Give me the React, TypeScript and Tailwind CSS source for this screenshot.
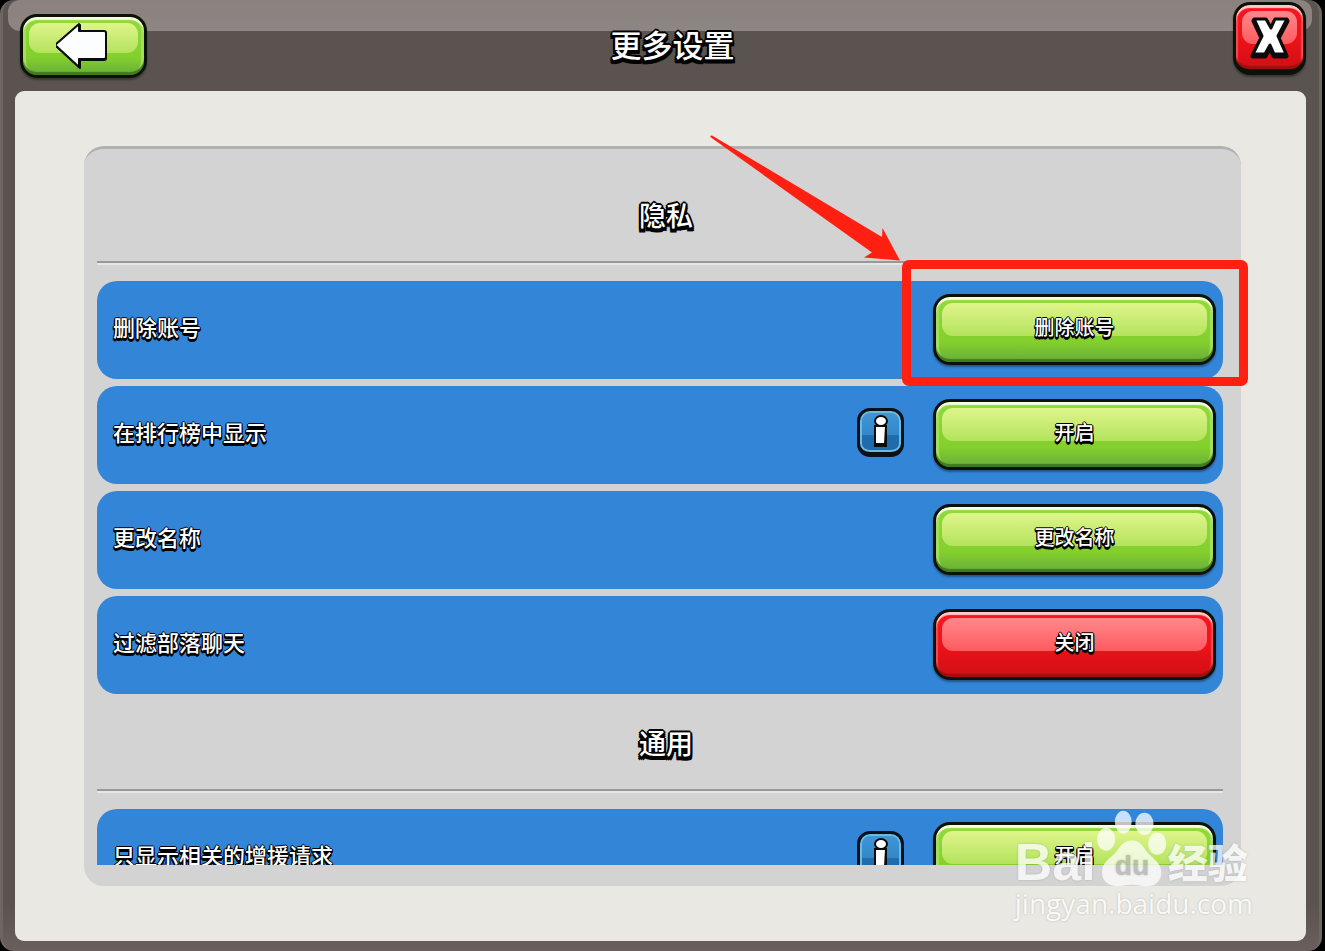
import type { ReactNode } from "react";
import { clsx } from "clsx";

const largeOutline =
  "[text-shadow:-2px_0_#000,2px_0_#000,0_-2px_#000,0_2px_#000,-1px_-1px_#000,1px_-1px_#000,-2px_2px_#000,2px_2px_#000,-2px_4px_#000,0_4px_#000,2px_4px_#000]";
const smallOutline =
  "[text-shadow:-1px_0_#000,1px_0_#000,0_-1px_#000,-1px_1px_#000,1px_1px_#000,-1px_2px_#000,0_2px_#000,1px_2px_#000,0_3px_#000]";

type Tone = "green" | "red";

interface GlossyButtonProps {
  tone: Tone;
  label?: string;
  className?: string;
  children: ReactNode;
}

function GlossyButton({ tone, label, className, children }: GlossyButtonProps) {
  return (
    <button
      type="button"
      aria-label={label}
      className={clsx(
        "relative flex shrink-0 items-center justify-center rounded-[17px] border-[3px] border-[#0d1208]",
        tone === "green" &&
          "bg-linear-to-b from-[#92da3a] via-[#83cf2c] via-70% to-[#67ad38] shadow-[inset_0_3px_1px_#f4fde2,inset_0_-3px_1px_#3d7a20,inset_3px_0_1px_#a4e05c,inset_-3px_0_1px_#a4e05c,0_2px_2px_rgba(0,0,0,0.35)]",
        tone === "red" &&
          "bg-linear-to-b from-[#fb1420] via-[#ef1219] to-[#cf1015] shadow-[inset_0_3px_1px_#ffc9cb,inset_0_-3px_1px_#a30c10,inset_2px_0_1px_#fb4750,inset_-2px_0_1px_#fb4750,0_2px_2px_rgba(0,0,0,0.35)]",
        className,
      )}
    >
      <span
        className={clsx(
          "absolute inset-x-[6px] top-[6px] bottom-1/2 mb-[-7px] rounded-[11px] bg-linear-to-b",
          tone === "green" && "from-[#dff58a] to-[#b3e35c]",
          tone === "red" && "from-[#ff878b] to-[#fd5a60]",
        )}
      />
      <span className="relative">{children}</span>
    </button>
  );
}

function InfoButton({ label }: { label: string }) {
  return (
    <button
      type="button"
      aria-label={label}
      className="mb-1 flex h-[49px] w-[47px] shrink-0 items-center justify-center rounded-[13px] border-[3px] border-b-[5px] border-[#0b1118] bg-linear-to-b from-[#3f98d8] from-0% via-[#3287c8] via-58% to-[#1e6cac] to-60% shadow-[inset_0_0_0_2px_#6db9e2]"
    >
      <svg viewBox="0 0 20 36" className="h-9 w-5" aria-hidden="true">
        <g fill="#fff" stroke="#0b0b0b" strokeWidth="2">
          <path d="M4 14h11v19H4z" fill="#0b0b0b" />
          <path d="M4 13h11l-1 18H4z" />
          <ellipse cx="10" cy="8" rx="6" ry="5" />
        </g>
      </svg>
    </button>
  );
}

// Red box and arrow drawn around the button that it wraps
function Callout({ children }: { children: ReactNode }) {
  return (
    <div className="relative">
      {children}
      <div className="pointer-events-none absolute -top-[34px] -right-[32px] -bottom-[21px] -left-[31px] z-10 rounded-[7px] border-[9px] border-[#ff2012]" />
      <svg
        viewBox="710 135 192 127"
        className="pointer-events-none absolute right-[314px] bottom-[103px] z-10 h-[127px] w-48"
        aria-hidden="true"
      >
        <path
          d="M710 136 712 135.500 882 237 882.500 228 900 260.500 864 257.500 872 252.500 711 137.500Z"
          fill="#ff2012"
        />
      </svg>
    </div>
  );
}

interface Setting {
  name: string;
  action: string;
  tone: Tone;
  info?: boolean;
  highlighted?: boolean;
}

const sections: { title: string; settings: Setting[] }[] = [
  {
    title: "隐私",
    settings: [
      { name: "删除账号", action: "删除账号", tone: "green", highlighted: true },
      { name: "在排行榜中显示", action: "开启", tone: "green", info: true },
      { name: "更改名称", action: "更改名称", tone: "green" },
      { name: "过滤部落聊天", action: "关闭", tone: "red" },
    ],
  },
  {
    title: "通用",
    settings: [
      { name: "只显示相关的增援请求", action: "开启", tone: "green", info: true },
    ],
  },
];

function SettingRow({ setting }: { setting: Setting }) {
  const button = (
    <GlossyButton tone={setting.tone} className="h-[71px] w-[283px]">
      <span className={clsx("text-[20px] leading-6 font-medium text-white", smallOutline)}>
        {setting.action}
      </span>
    </GlossyButton>
  );

  return (
    <li className="flex h-[98px] items-center rounded-[20px] bg-[#3385d8] pr-[7px] pb-0.5 pl-4">
      <span className={clsx("flex-1 text-[22px] leading-7 font-medium text-white", smallOutline)}>
        {setting.name}
      </span>
      <div className="flex items-center gap-[29px]">
        {setting.info && <InfoButton label={setting.name} />}
        {setting.highlighted ? <Callout>{button}</Callout> : button}
      </div>
    </li>
  );
}

function Watermark() {
  return (
    <div className="pointer-events-none absolute right-[72px] bottom-[32px] flex flex-col items-start text-white opacity-75 [text-shadow:0_0_2px_rgba(120,120,120,0.6)]">
      <div className="flex items-end">
        <span className="font-['Liberation_Sans',sans-serif] text-[52px] leading-[50px] font-bold">
          Bai
        </span>
        <svg viewBox="322 55 210 232" className="h-[78px] w-[72px]" aria-hidden="true">
          <g fill="#fff">
            <ellipse cx="350" cy="145" rx="27" ry="34" />
            <ellipse cx="401" cy="94" rx="25" ry="34" />
            <ellipse cx="464" cy="99" rx="27" ry="33" />
            <ellipse cx="502" cy="158" rx="27" ry="33" />
            <path d="M427 149c-28 0-36 22-51 38-18 17-38 28-38 57 0 25 18 40 44 40 16 0 28-4 45-4s28 5 46 5c24 0 41-16 41-41 0-27-20-38-37-55-15-16-22-40-50-40Z" />
          </g>
          <text
            x="427"
            y="250"
            textAnchor="middle"
            className="fill-[#b9b9b5] font-['Liberation_Sans',sans-serif] text-[84px] font-bold"
          >
            du
          </text>
        </svg>
        <span className="text-[40px] leading-[46px] font-black">经验</span>
      </div>
      <span className="font-['Open_Sans',sans-serif] text-[28px] leading-8">jingyan.baidu.com</span>
    </div>
  );
}

export default function App() {
  return (
    <div className="h-screen overflow-hidden bg-black pr-[3px] font-['Liberation_Sans','Noto_Sans_CJK_SC',sans-serif]">
      <div className="relative flex h-full flex-col rounded-[14px] border-x-[3px] border-[#6f6562] bg-linear-to-b from-[#5a534f] from-95% to-[#6a5f5c] pr-[13px] pb-[10px] pl-3">
        <div className="absolute top-0 right-[7px] left-[5px] h-[31px] rounded-[12px] bg-linear-to-b from-[#8b817e] to-[#8e8684]" />
        <header className="relative flex h-[91px] shrink-0 items-center justify-between pl-[5px]">
          <GlossyButton tone="green" label="返回" className="h-16 w-[127px]">
            <svg viewBox="3 0 56 48" className="h-12 w-14" aria-hidden="true">
              <path
                d="M3 24 27 3v7h24q2 0 2 2v24q0 2-2 2H27v8Z"
                fill="#0b0b0b"
                stroke="#0b0b0b"
                strokeWidth="2"
                strokeLinejoin="round"
              />
              <path
                d="M2 23 26 2v7h25q2 0 2 2v24q0 2-2 2H26v8Z"
                fill="#fbfdff"
                stroke="#0b0b0b"
                strokeWidth="2"
                strokeLinejoin="round"
              />
            </svg>
          </GlossyButton>
          <h1
            className={clsx(
              "pointer-events-none absolute inset-x-0 pt-0.5 pl-6 text-center text-[31px] leading-10 font-medium text-white",
              largeOutline,
            )}
          >
            更多设置
          </h1>
          <GlossyButton
            tone="red"
            label="关闭"
            className="mt-0.5 h-[73px] w-[73px] self-start border-b-[6px]"
          >
            <svg viewBox="0 0 48 48" className="h-12 w-12" aria-hidden="true">
              <g strokeLinejoin="round" stroke="#0b0b0b">
                <path
                  d="M8 8h12l5 9 4-9h12l-9 17 8 18H28l-4-9-5 9H7l9-18Z"
                  fill="#0b0b0b"
                  strokeWidth="5"
                />
                <path
                  d="M8 6h12l5 9 4-9h12l-9 17 8 18H28l-4-9-5 9H7l9-18Z"
                  fill="#fff"
                  strokeWidth="3"
                />
              </g>
            </svg>
          </GlossyButton>
        </header>

        <main className="flex min-h-0 flex-1 flex-col rounded-[9px] bg-[#e9e8e2] pt-[55px] pr-[65px] pb-[55px] pl-[69px]">
          <div className="flex min-h-0 flex-1 flex-col rounded-[20px] border-t-[3px] border-[#b1b1b1] bg-[#d3d3d3] pr-[18px] pb-[21px] pl-[13px]">
            {/* starts above the panel so that the arrow's tail is not clipped */}
            <div className="-mt-4 min-h-0 flex-1 overflow-x-visible overflow-y-clip pt-[38px]">
              {sections.map((section) => (
                <section key={section.title} className="mb-[5px]">
                  <h2
                    className={clsx(
                      "flex h-[92px] items-center justify-center border-b-2 border-[#989994] pt-px pl-3 text-[27px] leading-8 font-medium text-white shadow-[0_2px_0_#e6e6e2]",
                      largeOutline,
                    )}
                  >
                    {section.title}
                  </h2>
                  <ul className="flex flex-col gap-[7px] pt-[18px]">
                    {section.settings.map((setting) => (
                      <SettingRow key={setting.name} setting={setting} />
                    ))}
                  </ul>
                </section>
              ))}
            </div>
          </div>
        </main>
      </div>
      <Watermark />
    </div>
  );
}
